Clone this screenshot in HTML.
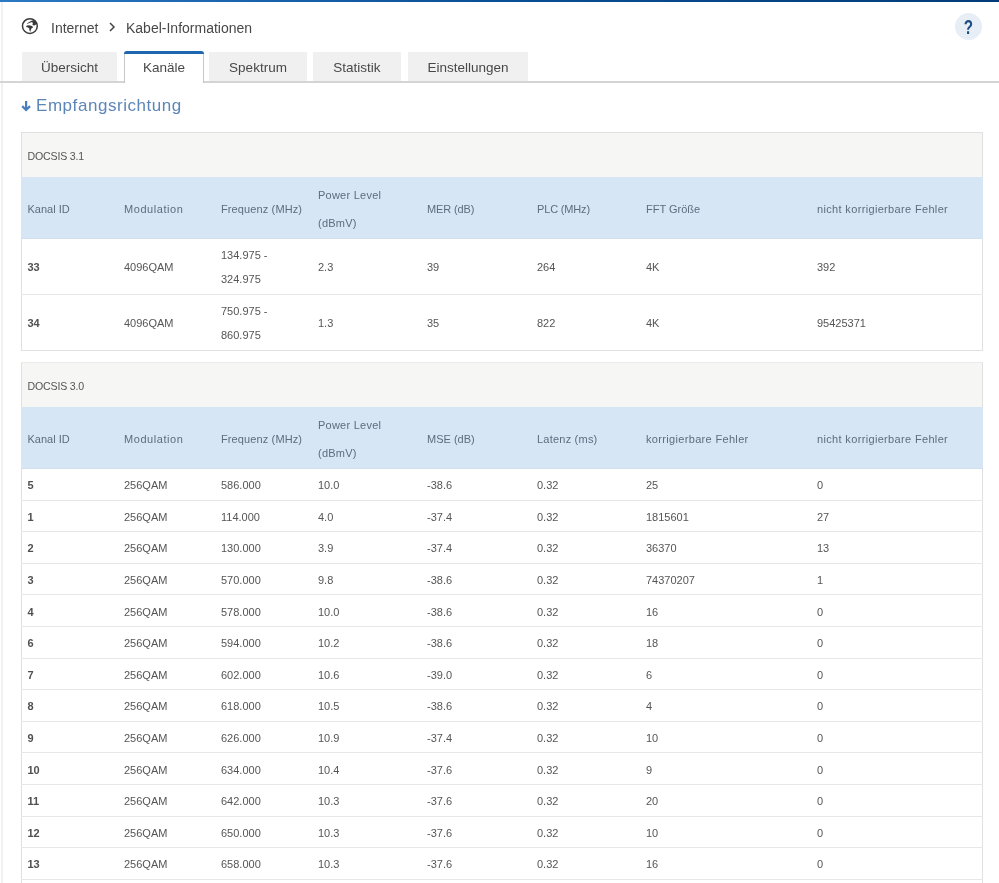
<!DOCTYPE html>
<html><head><meta charset="utf-8">
<style>
*{box-sizing:border-box}
html,body{margin:0;padding:0;background:#fff}
.wrap{position:absolute;left:0;top:0;width:999px;height:883px;will-change:transform}
body{width:999px;height:883px;overflow:hidden;position:relative;font-family:"Liberation Sans",sans-serif;color:#555}
.topbar{position:absolute;left:0;top:0;width:999px;height:2px;background:linear-gradient(to right,#2b78c4,#0a4f95 50%,#003c78)}
.leftline{position:absolute;left:1px;top:2px;width:2px;height:881px;background:#f1f1f1}
.globe{position:absolute;left:18px;top:16px;width:24px;height:22px}
.bc{position:absolute;top:19px;font-size:14px;line-height:18px;color:#484848;white-space:nowrap}
.chev{position:absolute;left:108px;top:21px;width:8px;height:12px}
.help{position:absolute;left:955px;top:13px;width:27px;height:27px;border-radius:50%;background:#e7eef6}
.help span{position:absolute;left:0;top:1px;width:27px;line-height:27px;text-align:center;font-weight:bold;font-size:19.5px;color:#1d4d85;transform:scaleX(0.78)}
.tabline{position:absolute;left:0;top:81px;width:999px;height:2px;background:#d4d4d4}
.tab{position:absolute;top:52px;height:29px;background:#f0f0f0;font-size:13.5px;line-height:31px;color:#484848;text-align:center;white-space:nowrap}
.tab.active{background:#fff;border-left:1px solid #c8c8c8;border-right:1px solid #c8c8c8;height:32px;top:51px;line-height:33px;z-index:2;border-radius:3px 3px 0 0}
.tab.active:before{content:"";position:absolute;left:-1px;right:-1px;top:0;height:3px;background:#1f66b0;border-radius:3px 3px 0 0}
.h2{position:absolute;left:36px;top:94.5px;font-size:17px;letter-spacing:0.55px;line-height:22px;color:#5d86b8;white-space:nowrap}
.arrow{position:absolute;left:21px;top:101px;width:10px;height:12px}
table{position:absolute;left:21px;width:962px;border-collapse:collapse;font-size:11px;table-layout:fixed}
td,th{padding:0 0 0 5.5px;text-align:left;font-weight:normal;vertical-align:middle;white-space:nowrap}
.t1{top:132px;border:1px solid #e0e0e0}
.sec td{background:#f6f6f4;height:44px;color:#555;padding-top:2px;font-size:10.6px;letter-spacing:-0.18px}
.hdr td{background:#d6e6f5;height:62px;color:#5c6d7e;line-height:28px;padding-top:3px}
.hdr td{border-bottom:1px solid #d3dfea}
.hdr td:first-child{border-left:1px solid #d6e6f5}
.hdr td:last-child{border-right:1px solid #d6e6f5}
.r2 td{height:56px;line-height:24px;padding-top:1px;border-top:1px solid #e7e7e7}
.r1 td{height:31.6px;border-top:1px solid #e7e7e7;padding-top:2px}
td.b{font-weight:bold;color:#505050}
.t2{top:362px;border:1px solid #e0e0e0;border-top-color:#ebebeb;border-bottom:none}
</style></head><body>
<div class="wrap">
<div class="topbar"></div>
<div class="leftline"></div>
<svg class="globe" viewBox="0 0 24 22"><circle cx="11.87" cy="10.1" r="7.4" fill="none" stroke="#3a3a3a" stroke-width="1.5"/><path d="M7.98 10.42 L8.98 9.53 L11.22 9.28 L12.97 9.73 L14.09 9.93 L15.21 11.22 L14.34 11.77 L13.59 12.27 L12.84 13.97 L12.22 16.08 L11.35 13.97 L11.17 12.27 L9.98 11.52 L8.48 11.02Z" fill="#3a3a3a"/><path d="M8.85 7.61 L11.22 5.99 L13.59 4.86 L15.21 4.19 L16.46 4.49 L18.08 5.86 L19.08 7.73 L18.08 8.60 L16.33 9.60 L14.96 9.28 L14.34 8.23 L14.91 7.48 L14.09 6.11 L11.97 6.78 L9.48 7.86Z" fill="#3a3a3a"/></svg>
<div class="bc" style="left:51px">Internet</div>
<svg class="chev" viewBox="0 0 8 12"><path d="M2 2 L6 6 L2 10" fill="none" stroke="#444" stroke-width="1.5"/></svg>
<div class="bc" style="left:126px">Kabel-Informationen</div>
<div class="help"><span>?</span></div>

<div class="tabline"></div>
<div class="tab" style="left:22px;width:95px">Übersicht</div>
<div class="tab active" style="left:124px;width:80px">Kanäle</div>
<div class="tab" style="left:209px;width:98px">Spektrum</div>
<div class="tab" style="left:313px;width:88px">Statistik</div>
<div class="tab" style="left:408px;width:120px">Einstellungen</div>

<svg class="arrow" viewBox="0 0 10 12"><path d="M5.1 0 V9 M1.2 5.1 L5.1 9 L9 5.1" fill="none" stroke="#4a7cc0" stroke-width="2.2"/></svg>
<div class="h2">Empfangsrichtung</div>

<table class="t1">
<colgroup><col style="width:97px"><col style="width:97px"><col style="width:97px"><col style="width:109px"><col style="width:110px"><col style="width:109px"><col style="width:171px"><col></colgroup>
<tr class="sec"><td colspan="8">DOCSIS 3.1</td></tr>
<tr class="hdr"><td>Kanal ID</td><td style="letter-spacing:0.55px">Modulation</td><td style="letter-spacing:0.12px">Frequenz (MHz)</td><td style="letter-spacing:0.24px">Power Level<br>(dBmV)</td><td style="letter-spacing:-0.14px">MER (dB)</td><td style="letter-spacing:-0.16px">PLC (MHz)</td><td>FFT Größe</td><td style="letter-spacing:0.34px">nicht korrigierbare Fehler</td></tr>
<tr class="r2"><td class="b">33</td><td>4096QAM</td><td>134.975 -<br>324.975</td><td>2.3</td><td>39</td><td>264</td><td>4K</td><td>392</td></tr>
<tr class="r2"><td class="b">34</td><td>4096QAM</td><td>750.975 -<br>860.975</td><td>1.3</td><td>35</td><td>822</td><td>4K</td><td>95425371</td></tr>
</table>

<table class="t2">
<colgroup><col style="width:97px"><col style="width:97px"><col style="width:97px"><col style="width:109px"><col style="width:110px"><col style="width:109px"><col style="width:171px"><col></colgroup>
<tr class="sec"><td colspan="8">DOCSIS 3.0</td></tr>
<tr class="hdr"><td>Kanal ID</td><td style="letter-spacing:0.55px">Modulation</td><td style="letter-spacing:0.12px">Frequenz (MHz)</td><td style="letter-spacing:0.24px">Power Level<br>(dBmV)</td><td>MSE (dB)</td><td style="letter-spacing:0.22px">Latenz (ms)</td><td style="letter-spacing:0.33px">korrigierbare Fehler</td><td style="letter-spacing:0.34px">nicht korrigierbare Fehler</td></tr>
<tr class="r1"><td class="b">5</td><td>256QAM</td><td>586.000</td><td>10.0</td><td>-38.6</td><td>0.32</td><td>25</td><td>0</td></tr>
<tr class="r1"><td class="b">1</td><td>256QAM</td><td>114.000</td><td>4.0</td><td>-37.4</td><td>0.32</td><td>1815601</td><td>27</td></tr>
<tr class="r1"><td class="b">2</td><td>256QAM</td><td>130.000</td><td>3.9</td><td>-37.4</td><td>0.32</td><td>36370</td><td>13</td></tr>
<tr class="r1"><td class="b">3</td><td>256QAM</td><td>570.000</td><td>9.8</td><td>-38.6</td><td>0.32</td><td>74370207</td><td>1</td></tr>
<tr class="r1"><td class="b">4</td><td>256QAM</td><td>578.000</td><td>10.0</td><td>-38.6</td><td>0.32</td><td>16</td><td>0</td></tr>
<tr class="r1"><td class="b">6</td><td>256QAM</td><td>594.000</td><td>10.2</td><td>-38.6</td><td>0.32</td><td>18</td><td>0</td></tr>
<tr class="r1"><td class="b">7</td><td>256QAM</td><td>602.000</td><td>10.6</td><td>-39.0</td><td>0.32</td><td>6</td><td>0</td></tr>
<tr class="r1"><td class="b">8</td><td>256QAM</td><td>618.000</td><td>10.5</td><td>-38.6</td><td>0.32</td><td>4</td><td>0</td></tr>
<tr class="r1"><td class="b">9</td><td>256QAM</td><td>626.000</td><td>10.9</td><td>-37.4</td><td>0.32</td><td>10</td><td>0</td></tr>
<tr class="r1"><td class="b">10</td><td>256QAM</td><td>634.000</td><td>10.4</td><td>-37.6</td><td>0.32</td><td>9</td><td>0</td></tr>
<tr class="r1"><td class="b">11</td><td>256QAM</td><td>642.000</td><td>10.3</td><td>-37.6</td><td>0.32</td><td>20</td><td>0</td></tr>
<tr class="r1"><td class="b">12</td><td>256QAM</td><td>650.000</td><td>10.3</td><td>-37.6</td><td>0.32</td><td>10</td><td>0</td></tr>
<tr class="r1"><td class="b">13</td><td>256QAM</td><td>658.000</td><td>10.3</td><td>-37.6</td><td>0.32</td><td>16</td><td>0</td></tr>
<tr class="r1"><td class="b">14</td><td>256QAM</td><td>666.000</td><td>10.3</td><td>-37.6</td><td>0.32</td><td>20</td><td>0</td></tr>
</table>
</div>
</body></html>
